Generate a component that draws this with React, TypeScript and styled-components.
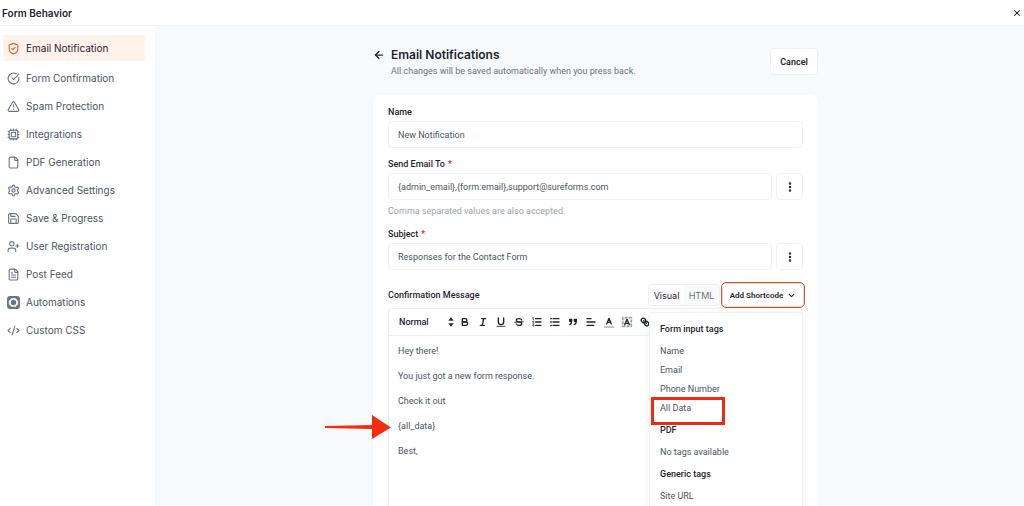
import React from "react";
import styled, { createGlobalStyle, css } from "styled-components";
import {
  ArrowLeft,
  ChevronDown,
  CircleCheckBig,
  CodeXml,
  Cpu,
  EllipsisVertical,
  File,
  FileText,
  Save,
  Settings,
  ShieldCheck,
  TriangleAlert,
  UserPlus,
  X,
} from "lucide-react";

const headingFont = 'Inter, "Liberation Sans", sans-serif';

const GlobalStyle = createGlobalStyle`
  *, *::before, *::after { box-sizing: border-box; }
  body {
    margin: 0;
    overflow: hidden;
    background: #f6fafc;
    color: #1f2430;
    font-family: Roboto, "Liberation Sans", sans-serif;
    font-size: 9px;
  }
  button, input, select { font: inherit; color: inherit; }
  button { cursor: pointer; padding: 0; }
  p, h1, h2, h3, ul { margin: 0; padding: 0; }
`;

const Page = styled.div`
  display: flex;
  flex-direction: column;
  height: 100vh;
`;

const TopBar = styled.header`
  display: flex;
  align-items: center;
  justify-content: space-between;
  flex: none;
  height: 26px;
  padding: 0 2px;
  background: #fff;
  border-bottom: 1px solid #f1f3f5;
`;

const TopTitle = styled.h1`
  font-family: ${headingFont};
  font-size: 10px;
  font-weight: 600;
  line-height: 24px;
`;

const PlainButton = styled.button`
  display: flex;
  align-items: center;
  justify-content: center;
  border: 0;
  background: none;
`;

const Body = styled.div`
  display: flex;
  flex: 1;
  min-height: 0;
`;

const Sidebar = styled.nav`
  flex: none;
  width: 155px;
  padding: 9px 10px 0 3px;
  background: #fff;
`;

const NavList = styled.ul`
  display: flex;
  flex-direction: column;
  gap: 2px;
  list-style: none;
`;

const NavLink = styled.a<{ $active?: boolean }>`
  display: flex;
  align-items: center;
  gap: 6px;
  height: 26px;
  padding: 0 4px;
  border-radius: 2px;
  color: #4b5563;
  font-family: ${headingFont};
  font-size: 10px;
  text-decoration: none;
  svg { flex: none; color: #6b7280; }
  ${(p) =>
    p.$active &&
    css`
      margin-bottom: 2px;
      background: #fff3ec;
      color: #1f2430;
      svg { color: #d0622f; }
    `}
`;

const Main = styled.main`
  display: flex;
  flex: 1;
  justify-content: center;
  min-width: 0;
  padding: 22px 0 0 12px;
  overflow: hidden;
`;

const Content = styled.div`
  display: flex;
  flex-direction: column;
  width: 100%;
  max-width: 445px;
`;

const Heading = styled.div`
  display: flex;
  flex: none;
  justify-content: space-between;
  align-items: flex-start;
  height: 47px;
`;

const TitleRow = styled.div`
  display: flex;
  gap: 6px;
  align-items: flex-start;
  & > button { height: 14px; }
`;

const Title = styled.h2`
  font-family: ${headingFont};
  font-size: 12px;
  font-weight: 600;
  line-height: 14px;
`;

const Subtitle = styled.p`
  color: #6b7280;
  line-height: 18px;
`;

const CancelButton = styled.button`
  width: 48px;
  height: 27px;
  border: 1px solid #eef0f3;
  border-radius: 4px;
  background: #fff;
  font-weight: 600;
`;

const Card = styled.form`
  display: flex;
  flex-direction: column;
  flex: 1;
  padding: 9px 15px 0;
  border-radius: 7px 7px 0 0;
  background: #fff;
`;

const Field = styled.div`
  display: flex;
  flex-direction: column;
  margin-bottom: 8px;
`;

const Label = styled.label`
  height: 17px;
  font-weight: 500;
  line-height: 17px;
`;

const Required = styled.span`
  margin-left: 3px;
  color: #dc2626;
`;

const InputRow = styled.div`
  display: flex;
  gap: 4px;
`;

const Input = styled.input`
  flex: 1;
  min-width: 0;
  height: 27px;
  padding: 0 9px;
  border: 1px solid #f0f2f4;
  border-radius: 4px;
  background: #fff;
  color: #4b5563;
  outline: 0;
`;

const MoreButton = styled(PlainButton)`
  width: 27px;
  height: 27px;
  border: 1px solid #f0f2f4;
  border-radius: 4px;
`;

const Help = styled.p`
  height: 18px;
  color: #9ca3af;
  line-height: 22px;
`;

const MessageBar = styled.div`
  display: flex;
  align-items: center;
  height: 26px;
  margin-top: 4px;
  margin-right: -2px;
`;

const MessageLabel = styled.span`
  flex: 1;
  font-weight: 500;
`;

const Modes = styled.div`
  display: flex;
  align-items: center;
  height: 22px;
  margin-right: 1px;
  border: 1px solid #eceff3;
  border-radius: 4px;
  background: #f8fafc;
`;

const ModeButton = styled.button<{ $active?: boolean }>`
  width: 35px;
  height: 20px;
  border: 0;
  border-radius: 3px;
  background: ${(p) => (p.$active ? "#fff" : "transparent")};
  color: ${(p) => (p.$active ? "#1f2430" : "#6b7280")};
  font-family: ${headingFont};
`;

const ShortcodeWrap = styled.div`
  position: relative;
`;

const ShortcodeButton = styled.button`
  display: flex;
  align-items: center;
  justify-content: center;
  gap: 4px;
  width: 84px;
  height: 26px;
  border: 1px solid #bd5a33;
  border-radius: 5px;
  background: #fff;
  box-shadow: inset 0 0 0 1px #f5d5c5;
  font-size: 8px;
  font-weight: 600;
`;

const Menu = styled.div`
  position: absolute;
  z-index: 1;
  top: 30px;
  right: 2px;
  width: 154px;
  padding: 4px 10px;
  border: 1px solid #f0f2f5;
  border-radius: 4px;
  background: #fff;
  box-shadow: 0 2px 8px rgba(15, 23, 42, 0.06);
`;

const MenuHeading = styled.h3`
  font-size: 9px;
  font-weight: 500;
  line-height: 25px;
`;

const MenuItem = styled.button`
  display: block;
  position: relative;
  width: 100%;
  height: 19px;
  border: 0;
  background: none;
  color: #4b5563;
  line-height: 19px;
  text-align: left;
`;

const EmptyNote = styled.p`
  color: #4b5563;
  line-height: 19px;
`;

const Highlight = styled.span`
  position: absolute;
  top: -2px;
  left: -9px;
  width: 74px;
  height: 28px;
  border: 3px solid #f02b14;
`;

const Editor = styled.div`
  display: flex;
  flex-direction: column;
  flex: 1;
  border: 1px solid #edf0f3;
  border-bottom: 0;
  border-radius: 4px 4px 0 0;
`;

const Toolbar = styled.div`
  display: flex;
  align-items: center;
  gap: 6px;
  height: 27px;
  padding-left: 10px;
  border-bottom: 1px solid #edf0f3;
`;

const StylePicker = styled.div`
  display: flex;
  align-items: center;
  width: 54px;
  svg { flex: none; margin-left: -12px; pointer-events: none; }
`;

const StyleSelect = styled.select`
  width: 58px;
  flex: none;
  padding: 0;
  border: 0;
  background: none;
  appearance: none;
  font-weight: 500;
`;

const Message = styled.div`
  position: relative;
  padding: 3px 9px;
  color: #4b5563;
  line-height: 25px;
`;

const Line = styled.p`
  position: relative;
`;

const Pointer = styled.svg`
  position: absolute;
  top: 0;
  left: -74px;
  width: 68px;
  height: 26px;
`;

function AutomationIcon() {
  return (
    <svg width="13" height="13" viewBox="0 0 24 24">
      <rect width="24" height="24" rx="6" fill="currentColor" />
      <path
        d="M8.500 4.500h7L20 9v6l-4.500 4.500h-7L4 15V9z"
        fill="#fff"
        stroke="#fff"
        strokeWidth="1"
        strokeLinejoin="round"
      />
      <circle cx="12" cy="12" r="5" fill="currentColor" />
    </svg>
  );
}

const tools: { name: string; drawing: React.ReactNode }[] = [
  {
    name: "Bold",
    drawing: (
      <>
        <path d="M5,4H9.500A2.500,2.500,0,0,1,12,6.500v0A2.500,2.500,0,0,1,9.500,9H5Z" />
        <path d="M5,9h5.500A2.500,2.500,0,0,1,13,11.500v0A2.500,2.500,0,0,1,10.500,14H5Z" />
      </>
    ),
  },
  { name: "Italic", drawing: <path d="M7 4h6M5 14h6M8 14l2-10" /> },
  {
    name: "Underline",
    drawing: (
      <>
        <path d="M5,3V9a4,4,0,0,0,8,0V3" />
        <path d="M3 15.500h12" strokeWidth="1.300" />
      </>
    ),
  },
  {
    name: "Strike",
    drawing: (
      <>
        <path d="M15.500 8.500l-13 1" strokeWidth="1.400" />
        <path d="M13 6C12.500 4.700 11 4 9 4 6.800 4 5 5 5 6.500 5 8 6.200 8.700 9 9s4 1 4 2.500S11.200 14 9 14s-3.500-.8-4-2" />
      </>
    ),
  },
  {
    name: "Ordered list",
    drawing: (
      <>
        <path d="M7 4h8M7 9h8M7 14h8" />
        <path
          strokeWidth="1.200"
          d="M2.300 3L3.500 2.400V5.500M4.500 10.500h-2c0-.2 1.850-1.100 1.850-2.200a1 1 0 0 0-1.850-.1M2.500 14.850a1 1 0 0 0 1.850-.1A.7.7 0 0 0 3.750 14a.7.7 0 0 0 .6-.74 1 1 0 0 0-1.850-.1"
        />
      </>
    ),
  },
  { name: "Bullet list", drawing: <path d="M6 4h9M6 9h9M6 14h9M2.500 4h1M2.500 9h1M2.500 14h1" /> },
  {
    name: "Quote",
    drawing: (
      <path
        fill="currentColor"
        d="M4 5h3v3H4zM11 5h3v3h-3zM7 8c0 4-3 5-3 5M14 8c0 4-3 5-3 5"
      />
    ),
  },
  { name: "Align", drawing: <path d="M3 4h6M3 9h12M3 14h10" /> },
  {
    name: "Text colour",
    drawing: (
      <>
        <path d="M5.500 12L9 3.500 12.500 12M6.400 9.500h5.200" />
        <path d="M2 16.500h14" strokeWidth="1.300" opacity=".6" />
      </>
    ),
  },
  {
    name: "Background colour",
    drawing: (
      <>
        <rect x="2" y="2" width="14" height="14" strokeWidth="1.500" strokeDasharray="1 1" strokeLinecap="butt" opacity=".8" />
        <rect x="4" y="4" width="10" height="10" strokeWidth="1.500" strokeDasharray="1 1" strokeLinecap="butt" opacity=".5" />
        <path d="M5.500 13L9 5l3.500 8M6.400 11h5.200" />
      </>
    ),
  },
  {
    name: "Link",
    drawing: (
      <path d="M7 7l4 4M8.900 4.577a3.476 3.476 0 0 1 .36 4.679A3.476 3.476 0 0 1 4.577 8.900C3.185 7.500 2.035 6.400 4.217 4.217S7.500 3.185 8.900 4.577ZM13.423 9.100a3.476 3.476 0 0 0-4.679-.36 3.476 3.476 0 0 0 .36 4.679c1.392 1.392 2.500 2.542 4.679.36S14.815 10.500 13.423 9.100Z" />
    ),
  },
];

function ToolIcon({ children }: { children: React.ReactNode }) {
  return (
    <svg
      width="12"
      height="12"
      viewBox="0 0 18 18"
      fill="none"
      stroke="currentColor"
      strokeWidth="2"
      strokeLinecap="round"
      strokeLinejoin="round"
    >
      {children}
    </svg>
  );
}

const navItems = [
  { label: "Email Notification", icon: <ShieldCheck size={13} /> },
  { label: "Form Confirmation", icon: <CircleCheckBig size={13} /> },
  { label: "Spam Protection", icon: <TriangleAlert size={13} /> },
  { label: "Integrations", icon: <Cpu size={13} /> },
  { label: "PDF Generation", icon: <File size={13} /> },
  { label: "Advanced Settings", icon: <Settings size={13} /> },
  { label: "Save & Progress", icon: <Save size={13} /> },
  { label: "User Registration", icon: <UserPlus size={13} /> },
  { label: "Post Feed", icon: <FileText size={13} /> },
  { label: "Automations", icon: <AutomationIcon /> },
  { label: "Custom CSS", icon: <CodeXml size={13} /> },
];

export default function App() {
  return (
    <Page>
      <GlobalStyle />
      <TopBar>
        <TopTitle>Form Behavior</TopTitle>
        <PlainButton aria-label="Close">
          <X size={10} strokeWidth={2.5} />
        </PlainButton>
      </TopBar>
      <Body>
        <Sidebar>
          <NavList>
            {navItems.map((item, i) => (
              <li key={item.label}>
                <NavLink href="#" $active={i === 0}>
                  {item.icon}
                  {item.label}
                </NavLink>
              </li>
            ))}
          </NavList>
        </Sidebar>
        <Main>
          <Content>
            <Heading>
              <TitleRow>
                <PlainButton aria-label="Back">
                  <ArrowLeft size={12} strokeWidth={2.5} />
                </PlainButton>
                <div>
                  <Title>Email Notifications</Title>
                  <Subtitle>All changes will be saved automatically when you press back.</Subtitle>
                </div>
              </TitleRow>
              <CancelButton>Cancel</CancelButton>
            </Heading>
            <Card>
              <Field>
                <Label htmlFor="name">Name</Label>
                <InputRow>
                  <Input id="name" defaultValue="New Notification" />
                </InputRow>
              </Field>
              <Field>
                <Label htmlFor="to">
                  Send Email To<Required>*</Required>
                </Label>
                <InputRow>
                  <Input id="to" defaultValue="{admin_email},{form:email},support@sureforms.com" />
                  <MoreButton type="button" aria-label="Recipient tags">
                    <EllipsisVertical size={12} strokeWidth={3} />
                  </MoreButton>
                </InputRow>
                <Help>Comma separated values are also accepted.</Help>
              </Field>
              <Field>
                <Label htmlFor="subject">
                  Subject<Required>*</Required>
                </Label>
                <InputRow>
                  <Input id="subject" defaultValue="Responses for the Contact Form" />
                  <MoreButton type="button" aria-label="Subject tags">
                    <EllipsisVertical size={12} strokeWidth={3} />
                  </MoreButton>
                </InputRow>
              </Field>
              <MessageBar>
                <MessageLabel id="message-label">Confirmation Message</MessageLabel>
                <Modes>
                  <ModeButton type="button" $active>
                    Visual
                  </ModeButton>
                  <ModeButton type="button">HTML</ModeButton>
                </Modes>
                <ShortcodeWrap>
                  <ShortcodeButton type="button" aria-expanded="true">
                    Add Shortcode
                    <ChevronDown size={9} strokeWidth={3} />
                  </ShortcodeButton>
                  <Menu>
                    <MenuHeading>Form input tags</MenuHeading>
                    <MenuItem type="button">Name</MenuItem>
                    <MenuItem type="button">Email</MenuItem>
                    <MenuItem type="button">Phone Number</MenuItem>
                    <MenuItem type="button">
                      All Data
                      <Highlight />
                    </MenuItem>
                    <MenuHeading>PDF</MenuHeading>
                    <EmptyNote>No tags available</EmptyNote>
                    <MenuHeading>Generic tags</MenuHeading>
                    <MenuItem type="button">Site URL</MenuItem>
                  </Menu>
                </ShortcodeWrap>
              </MessageBar>
              <Editor>
                <Toolbar>
                  <StylePicker>
                    <StyleSelect aria-label="Text style">
                      <option>Normal</option>
                    </StyleSelect>
                    <svg width="12" height="12" viewBox="0 0 18 18">
                      <path d="M5 11h8l-4 5zM5 7h8L9 2z" fill="currentColor" />
                    </svg>
                  </StylePicker>
                  {tools.map((tool) => (
                    <PlainButton type="button" key={tool.name} aria-label={tool.name}>
                      <ToolIcon>{tool.drawing}</ToolIcon>
                    </PlainButton>
                  ))}
                </Toolbar>
                <Message role="textbox" aria-labelledby="message-label">
                  <Line>Hey there!</Line>
                  <Line>You just got a new form response.</Line>
                  <Line>Check it out</Line>
                  <Line>
                    {"{all_data}"}
                    <Pointer viewBox="0 0 68 26">
                      <path d="M1 12l47-1V1l19 12.500L48 25V15L1 14z" fill="#f62c10" />
                    </Pointer>
                  </Line>
                  <Line>Best,</Line>
                </Message>
              </Editor>
            </Card>
          </Content>
        </Main>
      </Body>
    </Page>
  );
}
